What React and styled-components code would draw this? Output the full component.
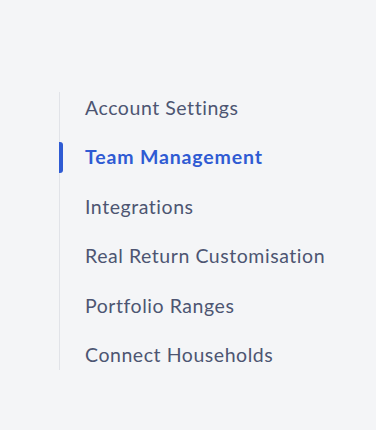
import React from "react";
import styled, { createGlobalStyle } from "styled-components";

const Global = createGlobalStyle`
  html, body {
    margin: 0;
    padding: 0;
    background: #f4f5f7;
  }
  body {
    font-family: "Lato", "Open Sans", sans-serif;
  }
`;

const Page = styled.div`
  width: 376px;
  height: 430px;
  background: #f4f5f7;
  padding: 92px 0 0 59px;
  box-sizing: border-box;
`;

const Menu = styled.ul`
  list-style: none;
  margin: 0;
  padding: 0;
  border-left: 1px solid #e1e3e8;
  display: flex;
  flex-direction: column;
  gap: 19.6px;
  width: 300px;
`;

const Item = styled.li`
  position: relative;
  height: 30px;
  display: flex;
  align-items: center;
  padding-left: 25px;
  font-size: 19.5px;
  letter-spacing: ${(p) => (p.$active ? "0.85px" : "0.55px")};
  font-weight: ${(p) => (p.$active ? 700 : 400)};
  color: ${(p) => (p.$active ? "#2f5bd3" : "#4d5572")};
  white-space: nowrap;
  cursor: pointer;

  &::before {
    content: "";
    display: ${(p) => (p.$active ? "block" : "none")};
    position: absolute;
    left: -1px;
    top: 0;
    width: 4px;
    height: 31px;
    background: #2f5bd3;
    border-radius: 0 3px 3px 0;
  }
`;

const items = [
  "Account Settings",
  "Team Management",
  "Integrations",
  "Real Return Customisation",
  "Portfolio Ranges",
  "Connect Households",
];

export default function App() {
  return (
    <>
      <Global />
      <Page>
        <Menu>
          {items.map((label) => (
            <Item key={label} $active={label === "Team Management"}>
              {label}
            </Item>
          ))}
        </Menu>
      </Page>
    </>
  );
}
